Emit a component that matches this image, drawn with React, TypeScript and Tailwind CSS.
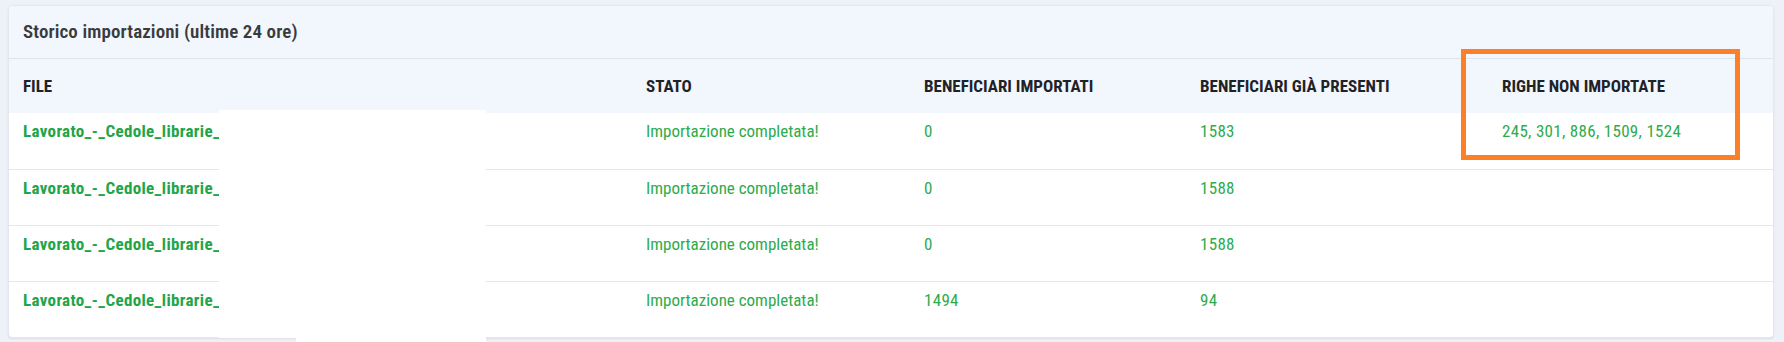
import React from "react";

const FONT = '"Roboto Condensed", "Roboto", "Liberation Sans", sans-serif';

const rows = [
  { file: "Lavorato_-_Cedole_librarie_", stato: "Importazione completata!", imp: "0", pres: "1583", non: "245, 301, 886, 1509, 1524" },
  { file: "Lavorato_-_Cedole_librarie_", stato: "Importazione completata!", imp: "0", pres: "1588", non: "" },
  { file: "Lavorato_-_Cedole_librarie_", stato: "Importazione completata!", imp: "0", pres: "1588", non: "" },
  { file: "Lavorato_-_Cedole_librarie_", stato: "Importazione completata!", imp: "1494", pres: "94", non: "" },
];

const cols = "grid grid-cols-[623px_278px_276px_302px_1fr]";

export default function App() {
  return (
    <div
      className="relative h-[342px] w-[1784px] overflow-hidden bg-[#eef2f8] pl-[8px] pr-[10px] pt-[5px]"
      style={{ fontFamily: FONT }}
    >
      <div className="overflow-hidden rounded-[4px] border border-[#e3e7ee] bg-white shadow-[0_1px_2px_rgba(0,0,0,0.08)]">
        <div className="flex h-[53px] items-center border-b border-[#dfe4eb] bg-[#f2f7fd] px-[14px]">
          <span className="text-[19px] font-semibold leading-[24px] tracking-[0.1px] text-[#3a3b3d]">
            Storico importazioni (ultime 24 ore)
          </span>
        </div>
        <div className={`${cols} h-[54px] items-center bg-[#f2f7fd] text-[17px] font-bold leading-[24px] text-[#1f2328]`}>
          <div className="pl-[14px]">FILE</div>
          <div className="pl-[14px]">STATO</div>
          <div className="pl-[14px]">BENEFICIARI IMPORTATI</div>
          <div className="pl-[14px]">BENEFICIARI GIÀ PRESENTI</div>
          <div className="pl-[14px]">RIGHE NON IMPORTATE</div>
        </div>
        {rows.map((r, i) => (
          <div
            key={i}
            className={`${cols} h-[56px] items-start pt-[6px] text-[17px] leading-[24px] text-[#2eab4c] ${i > 0 ? "border-t border-[#e3e6ea]" : ""}`}
          >
            <div className="whitespace-nowrap pl-[14px] font-bold tracking-[0.35px] text-[#22a548]">{r.file}</div>
            <div className="pl-[14px]">{r.stato}</div>
            <div className="pl-[14px] tracking-[0.3px]">{r.imp}</div>
            <div className="pl-[14px] tracking-[0.3px]">{r.pres}</div>
            <div className="pl-[14px] tracking-[0.3px]">{r.non}</div>
          </div>
        ))}
      </div>
      <div className="absolute left-[219px] top-[110px] h-[228px] w-[267px] bg-white" />
      <div className="absolute left-[296px] top-[330px] h-[12px] w-[190px] bg-white" />
      <div className="absolute left-[1461px] top-[49px] h-[111px] w-[279px] border-[5px] border-[#fd7f28]" />
    </div>
  );
}
